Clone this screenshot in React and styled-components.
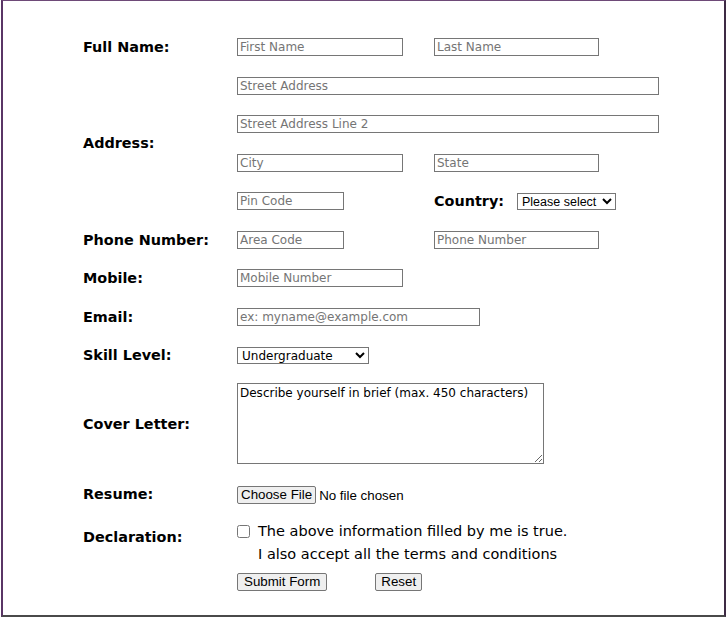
import React from 'react'
import styled, { createGlobalStyle } from 'styled-components'

const GlobalStyle = createGlobalStyle`
  html, body {
    margin: 0;
    padding: 0;
    background: #ffffff;
  }
  body {
    font-family: "DejaVu Sans", Verdana, sans-serif;
  }
`;

const Page = styled.div`
  box-sizing: border-box;
  width: 725px;
  height: 617px;
  margin-left: 1px;
  border-style: solid;
  border-width: 1px 2px 2px 2px;
  border-color: #6e4a78 #3d2a44 #4a4a4a #5a3566;
  padding: 37px 0 0 80px;
`;

const Form = styled.form`
  display: grid;
  grid-template-columns: 154px 1fr;
  row-gap: 20.5px;
  align-items: center;
`;

const Label = styled.label`
  grid-column: 1;
  grid-row: ${props => props.span ? `span ${props.span}` : 'auto'};
  align-self: ${props => props.top ? 'start' : 'center'};
  margin-top: ${props => props.top ?? 0}px;
  font-weight: bold;
  font-size: 14.4px;
  color: #000;
`;

const Cell = styled.div`
  grid-column: 2;
  display: flex;
  align-items: center;
  gap: ${props => props.gap ?? 31}px;
  min-height: 18px;
  margin-top: ${props => props.mt ?? 0}px;
`;

const Input = styled.input`
  box-sizing: border-box;
  width: ${props => props.w}px;
  height: 18px;
  margin: 0;
  padding: 0 2px;
  border: 1px solid #767676;
  border-radius: 0;
  font-family: "DejaVu Sans", Verdana, sans-serif;
  font-size: 12px;
  color: #000;
  &::placeholder {
    color: #757575;
  }
`;

const Country = styled.span`
  display: flex;
  align-items: center;
`;

const InlineLabel = styled.label`
  width: 83px;
  font-weight: bold;
  font-size: 14.4px;
  color: #000;
`;

const Select = styled.select`
  box-sizing: border-box;
  width: ${props => props.w}px;
  height: 17px;
  margin: 0;
  padding: 0;
  border: 1px solid #767676;
  border-radius: 0;
  background: #fff;
  color: #000;
  font-family: ${props => props.verdana ? '"DejaVu Sans", Verdana' : '"Liberation Sans", Arial'}, sans-serif;
  font-size: ${props => props.verdana ? 12 : 12.5}px;
`;

const TextArea = styled.textarea`
  box-sizing: border-box;
  width: 307px;
  height: 81px;
  margin: 0;
  padding: 2px;
  border: 1px solid #767676;
  font-family: "DejaVu Sans", Verdana, sans-serif;
  font-size: 12px;
  color: #000;
`;

const FileText = styled.span`
  font-family: "Liberation Sans", Arial, sans-serif;
  font-size: 13.33px;
  color: #000;
`;

const Button = styled.button`
  box-sizing: border-box;
  height: 18px;
  margin: 0;
  padding: 0 ${props => props.px ?? 6}px;
  border: 1px solid #767676;
  border-radius: 2px;
  background: #efefef;
  color: #000;
  font-family: "Liberation Sans", Arial, sans-serif;
  font-size: 13.33px;
  line-height: 16px;
`;

const Declaration = styled.div`
  grid-column: 2;
  display: grid;
  grid-template-columns: 21px auto;
  row-gap: 4px;
  margin-top: -3px;
  font-size: 14.5px;
  color: #000;
  line-height: 19px;
`;

const Check = styled.input`
  width: 13px;
  height: 13px;
  margin: 3px 0 0 0;
`;

const DeclText = styled.span`
  grid-column: 2;
`;

const Buttons = styled.div`
  grid-column: 2;
  display: flex;
  gap: 48px;
  margin-top: -11px;
`;

export default function App() {
  return (
    <>
      <GlobalStyle />
      <Page>
        <Form onSubmit={e => e.preventDefault()}>
          <Label>Full Name:</Label>
          <Cell>
            <Input w={166} placeholder="First Name" />
            <Input w={165} placeholder="Last Name" />
          </Cell>

          <Label span={4}>Address:</Label>
          <Cell>
            <Input w={422} placeholder="Street Address" />
          </Cell>
          <Cell>
            <Input w={422} placeholder="Street Address Line 2" />
          </Cell>
          <Cell>
            <Input w={166} placeholder="City" />
            <Input w={165} placeholder="State" />
          </Cell>
          <Cell gap={90}>
            <Input w={107} placeholder="Pin Code" />
            <Country>
              <InlineLabel>Country:</InlineLabel>
              <Select w={99} defaultValue="">
                <option value="">Please select</option>
                <option>India</option>
                <option>Other</option>
              </Select>
            </Country>
          </Cell>

          <Label>Phone Number:</Label>
          <Cell gap={90}>
            <Input w={107} placeholder="Area Code" />
            <Input w={165} placeholder="Phone Number" />
          </Cell>

          <Label>Mobile:</Label>
          <Cell>
            <Input w={166} placeholder="Mobile Number" />
          </Cell>

          <Label>Email:</Label>
          <Cell>
            <Input w={243} placeholder="ex: myname@example.com" />
          </Cell>

          <Label>Skill Level:</Label>
          <Cell>
            <Select w={132} verdana defaultValue="Undergraduate">
              <option>Undergraduate</option>
              <option>Graduate</option>
              <option>Postgraduate</option>
            </Select>
          </Cell>

          <Label>Cover Letter:</Label>
          <Cell mt={-2}>
            <TextArea defaultValue="Describe yourself in brief (max. 450 characters)" />
          </Cell>

          <Label>Resume:</Label>
          <Cell gap={3} mt={2}>
            <Button type="button" px={3}>Choose File</Button>
            <FileText>No file chosen</FileText>
          </Cell>

          <Label top={4}>Declaration:</Label>
          <Declaration>
            <Check type="checkbox" />
            <span>The above information filled by me is true.</span>
            <DeclText>I also accept all the terms and conditions</DeclText>
          </Declaration>

          <Buttons>
            <Button type="submit">Submit Form</Button>
            <Button type="reset" px={5}>Reset</Button>
          </Buttons>
        </Form>
      </Page>
    </>
  );
}
